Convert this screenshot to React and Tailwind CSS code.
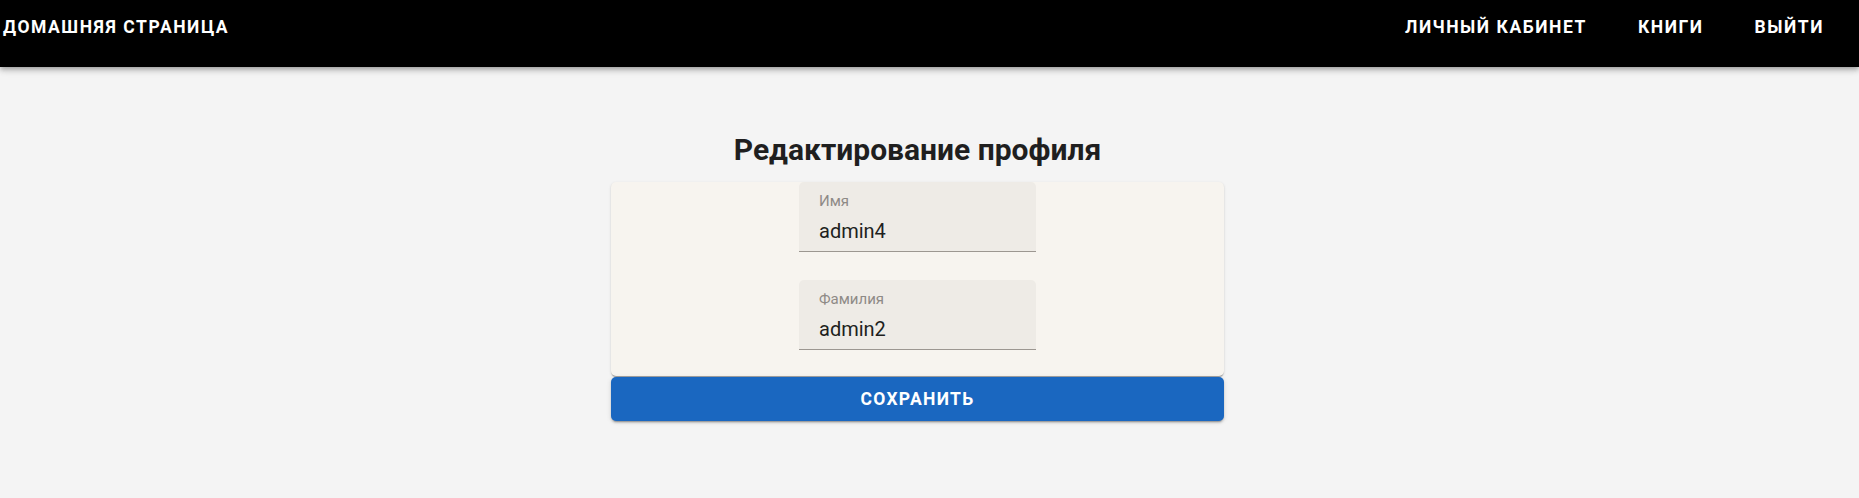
const font = { fontFamily: 'Roboto, "Liberation Sans", sans-serif' };

function Field({ label, value, className = '' }) {
  return (
    <div className={`h-[70px] w-[237px] rounded-t-[5px] border-b border-[#9c9791] bg-[#eeebe6] pl-[20px] pt-[12px] ${className}`}>
      <div className="text-[15px] leading-[15px] text-[#8e8a86]">{label}</div>
      <div className="mt-[12px] text-[20px] leading-[20px] text-[#211f1d]">{value}</div>
    </div>
  );
}

export default function App() {
  return (
    <div className="min-h-screen bg-[#f4f4f4]" style={font}>
      <header className="relative z-10 h-[67px] bg-black text-white shadow-[0_2px_4px_-1px_rgba(0,0,0,0.2),0_4px_5px_0_rgba(0,0,0,0.14),0_1px_10px_0_rgba(0,0,0,0.12)]">
        <div className="flex h-[55px] items-center justify-between pl-[3px] pr-[35px] text-[17.5px] font-bold uppercase tracking-[1.55px]">
          <span>Домашняя страница</span>
          <nav className="flex items-center gap-[51px]">
            <span>Личный кабинет</span>
            <span>Книги</span>
            <span>Выйти</span>
          </nav>
        </div>
      </header>

      <main className="flex justify-center pr-[24px] pt-[63px]">
        <div className="w-[613px]">
          <h1 className="text-center text-[30px] font-bold leading-[40px] text-[#1f1f1f]">Редактирование профиля</h1>
          <section className="mt-[12px] flex flex-col items-center rounded-[5px] bg-[#f7f4ef] pb-[26px] shadow-[0_2px_1px_-1px_rgba(0,0,0,0.2),0_1px_1px_0_rgba(0,0,0,0.14),0_1px_3px_0_rgba(0,0,0,0.12)]">
            <Field label="Имя" value="admin4" />
            <Field label="Фамилия" value="admin2" className="mt-[28px]" />
          </section>
          <button className="mt-px flex h-[44px] w-full items-center justify-center rounded-[5px] bg-[#1a67c0] text-[17.5px] font-bold uppercase tracking-[1.3px] text-white shadow-[0_3px_1px_-2px_rgba(0,0,0,0.2),0_2px_2px_0_rgba(0,0,0,0.14),0_1px_5px_0_rgba(0,0,0,0.12)]">
            Сохранить
          </button>
        </div>
      </main>
    </div>
  );
}
